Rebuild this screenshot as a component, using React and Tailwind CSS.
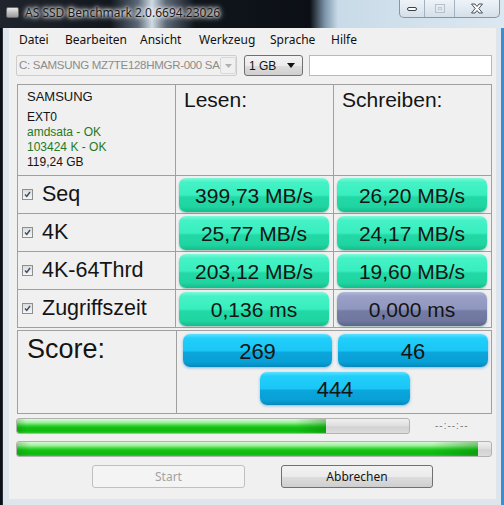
import React from "react";

const green =
  "bg-[linear-gradient(to_bottom,#7ef9da_0%,#45f2c6_12%,#38eebf_50%,#22d9a6_56%,#1fd4a0_85%,#14bd8c_100%)]";
const greyB =
  "bg-[linear-gradient(to_bottom,#b3b8da_0%,#9aa0c7_12%,#9097bf_50%,#747ca6_56%,#6f779f_85%,#5d648b_100%)]";
const blue =
  "bg-[linear-gradient(to_bottom,#5fe0ff_0%,#22cffb_12%,#1ac6f5_50%,#0aa6dc_56%,#08a0d6_85%,#0789bd_100%)]";

function ValBox({ text, kind = "green" }) {
  const bg = kind === "green" ? green : greyB;
  return (
    <div
      className={`h-[34px] w-[150px] rounded-[7px] ${bg} shadow-[0_1px_2px_rgba(0,90,60,0.35)] flex items-center justify-center text-[21px] text-[#141414] leading-none pt-[1px]`}
    >
      {text}
    </div>
  );
}

function Check() {
  return (
    <div className="w-[11px] h-[11px] border border-[#8e8f8f] bg-[linear-gradient(to_bottom,#dcdcdc,#f6f6f6)] flex items-center justify-center mr-[9px]">
      <svg width="7" height="7" viewBox="0 0 7 7">
        <path d="M1 3.5 L2.8 5.5 L6 1" stroke="#3b4a6a" strokeWidth="1.4" fill="none" />
      </svg>
    </div>
  );
}

function Row({ label, r, w, wKind = "green" }) {
  return (
    <>
      <div className="border-r border-b border-[#a0a0a0] h-[38px] flex items-center pl-[4px]">
        <Check />
        <span className="text-[21.5px] text-[#141414] leading-none">{label}</span>
      </div>
      <div className="border-r border-b border-[#a0a0a0] h-[38px] flex items-center pl-[3px]">
        <ValBox text={r} />
      </div>
      <div className="border-r border-b border-[#a0a0a0] h-[38px] flex items-center pl-[3px]">
        <ValBox text={w} kind={wKind} />
      </div>
    </>
  );
}

function ScoreBox({ text, w }) {
  return (
    <div
      className={`h-[33px] rounded-[7px] ${blue} shadow-[0_1px_3px_rgba(0,120,190,0.45)] flex items-center justify-center text-[22px] text-[#141414] leading-none pt-[2px]`}
      style={{ width: w }}
    >
      {text}
    </div>
  );
}

function Bar({ width, fill }) {
  return (
    <div
      className="h-[16px] rounded-[3px] border border-[#b2b2b2] bg-[linear-gradient(to_bottom,#f0f0f0,#dedede_50%,#d2d2d2_55%,#dcdcdc)] overflow-hidden"
      style={{ width }}
    >
      <div
        className="h-full rounded-l-[2px] bg-[linear-gradient(to_bottom,#d8fbd5_0%,#9ef09a_25%,#3fd63f_45%,#13c313_60%,#0fb80f_85%,#31c731_100%)] relative"
        style={{ width: fill }}
      >
        <div className="absolute inset-0 bg-[linear-gradient(to_right,rgba(0,120,0,0.25)_0%,transparent_3%,transparent_90%,rgba(0,110,0,0.35)_100%)]" />
      </div>
    </div>
  );
}

export default function App() {
  return (
    <div
      className="w-[504px] h-[505px] overflow-hidden flex flex-col bg-[linear-gradient(to_right,#0b0f14_501px,#3a8fd0_501px)] font-['Liberation_Sans',Arial,sans-serif]"
    >
      {/* Title bar */}
      <div className="h-[28px] shrink-0 flex items-start bg-[linear-gradient(to_right,#20252d_0px,#12171e_110px,#5b6877_138px,#d0dbe4_152px,#5c6876_166px,#10151c_195px,#0c1016_310px,#7d96ab_325px,#c9dbe8_338px,#dce8f1_504px)]">
        <div className="ml-[6px] mt-[7px] w-[13px] h-[11px] rounded-[2px] bg-[linear-gradient(to_bottom,#e8e8e8,#9a9a9a)] border border-[#6a6a6a]" />
        <span className="ml-[6px] mt-[5px] text-[12px] font-['Noto_Sans',sans-serif] text-[#1a1a1a] [text-shadow:0_0_7px_#ffffff,0_0_5px_#ffffff,0_0_3px_#ffffff] leading-[16px]">
          AS SSD Benchmark 2.0.6694.23026
        </span>
        <div className="flex-1" />
        <div className="mr-[4px] flex h-[18px] border border-t-0 border-[#8596a8] rounded-b-[5px] overflow-hidden bg-[linear-gradient(to_bottom,#eef3f8,#d5dfe9)]">
          <div className="w-[25px] flex items-center justify-center border-r border-[#a4b2c0]">
            <div className="w-[10px] h-[4px] rounded-[2px] border border-[#3a3f48] bg-white" />
          </div>
          <div className="w-[30px] flex items-center justify-center border-r border-[#a4b2c0]">
            <div className="w-[10px] h-[9px] border border-[#b7c1cb] flex items-center justify-center">
              <div className="w-[4px] h-[3px] border border-[#c2cbd4]" />
            </div>
          </div>
          <div className="w-[44px] flex items-center justify-center">
            <svg width="14" height="11" viewBox="0 0 14 11">
              <path
                d="M1.5 1 L5 1 L7 3.5 L9 1 L12.5 1 L8.8 5.5 L12.5 10 L9 10 L7 7.5 L5 10 L1.5 10 L5.2 5.5 Z"
                fill="#ffffff"
                stroke="#4a4f58"
                strokeWidth="1"
                strokeLinejoin="round"
              />
            </svg>
          </div>
        </div>
      </div>

      {/* Window body */}
      <div className="h-[477px] ml-[2px] mr-[3px] bg-[#dfe5ec] border-l border-[#27303b] pl-[6px] pr-[5px] pb-[4px] flex">
        <div className="w-[487px] h-[471px] bg-[#f0f0f0] flex flex-col">
          {/* Menu */}
          <div className="h-[23px] flex items-center pl-[10px] text-[12px] font-['Noto_Sans',sans-serif] text-[#111]">
            <span className="w-[46px]">Datei</span>
            <span className="w-[75px]">Bearbeiten</span>
            <span className="w-[59px]">Ansicht</span>
            <span className="w-[71px]">Werkzeug</span>
            <span className="w-[61px]">Sprache</span>
            <span>Hilfe</span>
          </div>

          {/* Combo row */}
          <div className="mt-[4px] h-[21px] flex pl-[7px] text-[12px]">
            <div className="w-[221px] h-full border border-[#cdcdcd] rounded-[2px] bg-[#f0f0f0] flex items-center overflow-hidden">
              <span className="pl-[2px] text-[#8c8c8c] text-[11.5px] whitespace-nowrap w-[203px] tracking-[-0.3px]">
                C: SAMSUNG MZ7TE128HMGR-000 SA
              </span>
              <div className="w-[16px] h-[17px] border border-[#d8d8d8] rounded-[2px] flex items-center justify-center">
                <svg width="7" height="4" viewBox="0 0 7 4">
                  <path d="M0 0 L7 0 L3.5 4 Z" fill="#b0b0b0" />
                </svg>
              </div>
            </div>
            <div className="ml-[7px] w-[59px] h-full border border-[#707070] rounded-[3px] bg-[linear-gradient(to_bottom,#f3f3f3,#ebebeb_50%,#dddddd_52%,#cfcfcf)] flex items-center">
              <span className="pl-[4px] text-[#111] flex-1">1 GB</span>
              <svg width="8" height="5" viewBox="0 0 8 5" className="mr-[7px]">
                <path d="M0 0 L8 0 L4 5 Z" fill="#111" />
              </svg>
            </div>
            <div className="ml-[6px] w-[183px] h-full border border-[#b5b9c0] bg-white" />
          </div>

          {/* Table */}
          <div className="mt-[8px] ml-[8px] w-[475px] border-l border-t border-[#a0a0a0] grid grid-cols-[158px_158px_158px]">
            <div className="border-r border-b border-[#a0a0a0] h-[91px] pl-[9px] pt-[4px] text-[12px] leading-[15px] text-[#141414]">
              <div className="text-[13px] leading-[15px]">SAMSUNG</div>
              <div className="mt-[6px]">EXT0</div>
              <div className="text-[#237a23]">amdsata - OK</div>
              <div className="text-[#237a23]">103424 K - OK</div>
              <div>119,24 GB</div>
            </div>
            <div className="border-r border-b border-[#a0a0a0] h-[91px] pl-[8px] pt-[3px] text-[21px] text-[#141414] leading-[24px]">
              Lesen:
            </div>
            <div className="border-r border-b border-[#a0a0a0] h-[91px] pl-[8px] pt-[3px] text-[21px] text-[#141414] leading-[24px]">
              Schreiben:
            </div>
            <Row label="Seq" r="399,73 MB/s" w="26,20 MB/s" />
            <Row label="4K" r="25,77 MB/s" w="24,17 MB/s" />
            <Row label="4K-64Thrd" r="203,12 MB/s" w="19,60 MB/s" />
            <Row label="Zugriffszeit" r="0,136 ms" w="0,000 ms" wKind="grey" />
          </div>

          {/* Score */}
          <div className="mt-[2px] ml-[8px] w-[475px] h-[84px] border border-[#a0a0a0] flex">
            <div className="w-[159px] h-full border-r border-[#a0a0a0] pl-[9px] pt-[3px] text-[27px] text-[#141414] leading-[30px]">
              Score:
            </div>
            <div className="flex-1 flex flex-col pt-[3px] pl-[6px]">
              <div className="flex gap-[6px]">
                <ScoreBox text="269" w={149} />
                <ScoreBox text="46" w={150} />
              </div>
              <div className="mt-[5px] ml-[77px]">
                <ScoreBox text="444" w={150} />
              </div>
            </div>
          </div>

          {/* Progress */}
          <div className="mt-[4px] ml-[7px] flex items-center">
            <Bar width={394} fill={309} />
            <span className="ml-[25px] text-[10px] text-[#7a7a7a] tracking-[1px] leading-none">
              --:--:--
            </span>
          </div>
          <div className="mt-[7px] ml-[7px]">
            <Bar width={476} fill={461} />
          </div>

          {/* Buttons */}
          <div className="mt-[8px] flex text-[12px] font-['Noto_Sans',sans-serif]">
            <div className="ml-[83px] w-[153px] h-[23px] border border-[#c0c0c0] rounded-[3px] bg-[#f4f4f4] flex items-center justify-center text-[#a3a3a3]">
              Start
            </div>
            <div className="ml-[36px] w-[152px] h-[23px] border border-[#707070] rounded-[3px] bg-[linear-gradient(to_bottom,#f2f2f2,#ebebeb_50%,#dddddd_52%,#cfcfcf)] flex items-center justify-center text-[#141414]">
              Abbrechen
            </div>
          </div>
        </div>
      </div>
    </div>
  );
}
